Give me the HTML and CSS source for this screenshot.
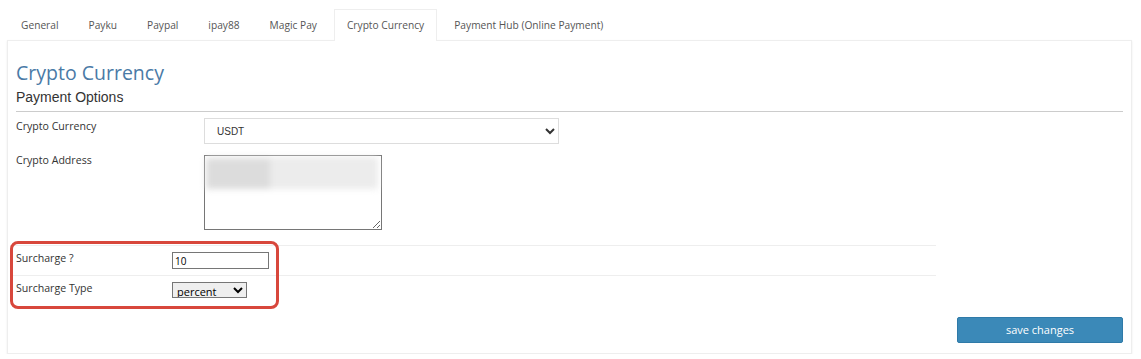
FILE: index.html
```html
<!DOCTYPE html>
<html lang="en">
<head>
  <meta charset="UTF-8" />
  <meta name="viewport" content="width=device-width, initial-scale=1.0" />
  <title>Payment Settings | Crypto Currency</title>
  <link rel="stylesheet" href="styles.css">
</head>
<body>

  <ul class="tabs">
    <li><a href="#">General</a></li>
    <li><a href="#">Payku</a></li>
    <li><a href="#">Paypal</a></li>
    <li><a href="#">ipay88</a></li>
    <li><a href="#">Magic Pay</a></li>
    <li class="active"><a href="#">Crypto Currency</a></li>
    <li><a href="#">Payment Hub (Online Payment)</a></li>
  </ul>

  <div class="panel">
    <h2>Crypto Currency</h2>
    <h4>Payment Options</h4>

    <div class="field first">
      <label>Crypto Currency</label>
      <select class="wide-select">
        <option>USDT</option>
      </select>
    </div>

    <div class="field">
      <label>Crypto Address</label>
      <div class="address">
        <textarea></textarea>
        <div class="blurred"><span></span></div>
      </div>
    </div>

    <div class="surcharge">
      <div class="highlight"></div>
      <table>
        <tr>
          <td>Surcharge ?</td>
          <td><input type="text" value="10"></td>
        </tr>
        <tr>
          <td>Surcharge Type</td>
          <td>
            <select class="small-select">
              <option>percent</option>
              <option>fixed</option>
            </select>
          </td>
        </tr>
      </table>
    </div>

    <div class="actions">
      <button>save changes</button>
    </div>
  </div>

</body>
</html>
```

FILE: styles.css
```css
body {
  font-family: "Open Sans", "DejaVu Sans", sans-serif;
  background: #fff;
  margin: 0;
  color: #333;
}
.tabs {
  list-style: none;
  margin: 0;
  padding: 9px 0 0 8px;
  display: flex;
  height: 31px;
}
.tabs li {
  margin-right: 4px;
}
.tabs a {
  display: block;
  padding: 0 12px;
  height: 31px;
  line-height: 30px;
  font-size: 10.2px;
  color: #555;
  text-decoration: none;
  border: 1px solid transparent;
  border-bottom: none;
  box-sizing: border-box;
}
.tabs .active a {
  background: #fff;
  border-color: #eee;
  height: 32px;
  position: relative;
  z-index: 1;
}
.panel {
  margin: 0 9px 0 7px;
  border: 1px solid #eee;
  box-shadow: 0 1px 2px rgba(0,0,0,0.08);
  padding: 20px 8px 8px 8px;
  height: 284px;
}
h2 {
  color: #4a7aa6;
  font-family: "Open Sans", sans-serif;
  font-weight: 500;
  font-size: 19.5px;
  margin: 0;
  line-height: 24px;
}
h4 {
  font-family: "Liberation Sans", Arial, sans-serif;
  font-weight: normal;
  font-size: 14px;
  margin: 2px 0 0 0;
  line-height: 20px;
  padding-bottom: 4px;
  border-bottom: 1px solid #ccc;
}
.field {
  display: flex;
  margin-top: 8px;
}
.field.first {
  margin-top: 6px;
}
.field label {
  width: 188px;
  font-size: 10.6px;
  padding-top: 1px;
}
.wide-select {
  width: 355px;
  height: 26px;
  border: 1px solid #ddd;
  background: #fff;
  font-family: "Liberation Sans", Arial, sans-serif;
  font-size: 10px;
  color: #333;
  padding: 0 8px;
}
.address {
  position: relative;
  width: 178px;
  height: 75px;
  margin-top: 3px;
}
.address textarea {
  width: 178px;
  height: 75px;
  box-sizing: border-box;
  border: 1px solid #767676;
  resize: both;
  margin: 0;
  display: block;
}
.blurred {
  position: absolute;
  left: 2px;
  top: 2px;
  width: 172px;
  height: 32px;
  background: #ececec;
  filter: blur(3px);
}
.blurred span {
  display: block;
  width: 64px;
  height: 30px;
  margin-top: 2px;
  background: #dcdcdc;
}
.surcharge {
  position: relative;
  margin-top: 15px;
  width: 926px;
  margin-left: -6px;
}
.highlight {
  position: absolute;
  left: 0;
  top: -4px;
  width: 263px;
  height: 62px;
  border: 3px solid #d8473c;
  border-radius: 8px;
}
.surcharge table {
  width: 100%;
  border-collapse: collapse;
}
.surcharge td {
  border-top: 1px solid #eee;
  font-size: 10.6px;
  height: 30px;
  padding: 0;
  vertical-align: top;
  padding-top: 6px;
  box-sizing: border-box;
}
.surcharge td:first-child {
  width: 162px;
  padding-left: 6px;
  padding-top: 5px;
}
.surcharge input {
  width: 97px;
  height: 17px;
  box-sizing: border-box;
  border: 1px solid #767676;
  font-family: "Open Sans", sans-serif;
  font-size: 10px;
  padding: 0 2px;
  margin: 0;
}
.small-select {
  width: 75px;
  height: 16px;
  border: 1px solid #767676;
  font-family: "Open Sans", sans-serif;
  font-size: 11px;
  padding: 0;
  margin: 0;
}
.actions {
  display: flex;
  justify-content: flex-end;
  margin-top: 11px;
}
.actions button {
  width: 166px;
  height: 26px;
  background: #3b89b8;
  color: #fff;
  border: 1px solid #2f7aa8;
  border-radius: 2px;
  font-family: "Open Sans", sans-serif;
  font-size: 11px;
  cursor: pointer;
}
```
